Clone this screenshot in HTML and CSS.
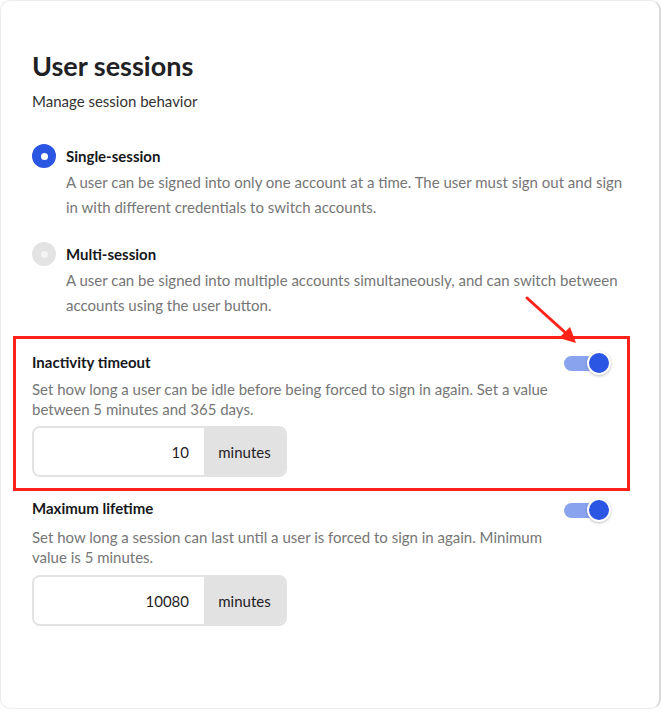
FILE: index.html
```html
<!DOCTYPE html>
<html lang="en">
<head>
<meta charset="utf-8">
<title>User sessions</title>
<link rel="stylesheet" href="styles.css">
</head>
<body>
<div class="card">
  <h1 class="title">User sessions</h1>
  <p class="subtitle">Manage session behavior</p>

  <div class="options">
    <div class="option">
      <span class="radio radio-on"></span>
      <div class="option-body">
        <div class="option-label">Single-session</div>
        <p class="option-desc">A user can be signed into only one account at a time. The user must sign out and sign in with different credentials to switch accounts.</p>
      </div>
    </div>
    <div class="option">
      <span class="radio radio-off"></span>
      <div class="option-body">
        <div class="option-label">Multi-session</div>
        <p class="option-desc">A user can be signed into multiple accounts simultaneously, and can switch between accounts using the user button.</p>
      </div>
    </div>
  </div>

  <section class="setting setting-highlight">
    <div class="setting-head">
      <div class="setting-text">
        <div class="setting-label">Inactivity timeout</div>
        <p class="setting-desc">Set how long a user can be idle before being forced to sign in again. Set a value between 5 minutes and 365 days.</p>
      </div>
      <span class="toggle"><span class="knob"></span></span>
    </div>
    <div class="field">
      <span class="field-value">10</span>
      <span class="field-unit">minutes</span>
    </div>
  </section>

  <section class="setting setting-plain">
    <div class="setting-head">
      <div class="setting-text">
        <div class="setting-label">Maximum lifetime</div>
        <p class="setting-desc">Set how long a session can last until a user is forced to sign in again. Minimum value is 5 minutes.</p>
      </div>
      <span class="toggle"><span class="knob"></span></span>
    </div>
    <div class="field">
      <span class="field-value">10080</span>
      <span class="field-unit">minutes</span>
    </div>
  </section>

  <svg class="arrow" width="70" height="60" viewBox="0 0 70 60">
    <line x1="7" y1="7" x2="48" y2="44" stroke="#ff2218" stroke-width="3" stroke-linecap="round"/>
    <polygon points="56,52 39,47 50,36" fill="#ff2218"/>
  </svg>
</div>
</body>
</html>
```

FILE: styles.css
```css
* { box-sizing: border-box; }

html, body {
  margin: 0;
  padding: 0;
  background: #ffffff;
}

body {
  font-family: "Lato", "Noto Sans", sans-serif;
  color: #1f2125;
}

.card {
  position: relative;
  width: 661px;
  height: 709px;
  background: #ffffff;
  border: 1px solid #ececec;
  border-right: 2px solid #d9d9d9;
  border-radius: 10px;
  padding: 48px 32px 0 31px;
}

.title {
  margin: 0;
  font-size: 27px;
  line-height: 34px;
  font-weight: 700;
  color: #1f2125;
}

.subtitle {
  margin: 8px 0 0;
  font-size: 15px;
  line-height: 20px;
  color: #333;
}

.options {
  display: flex;
  flex-direction: column;
  gap: 22px;
  margin-top: 33px;
}

.option {
  display: flex;
  gap: 10px;
  align-items: flex-start;
}

.radio {
  flex: none;
  width: 24px;
  height: 24px;
  border-radius: 50%;
  display: flex;
  align-items: center;
  justify-content: center;
}

.radio::after {
  content: "";
  width: 7px;
  height: 7px;
  border-radius: 50%;
  background: #ffffff;
}

.radio-on { background: #2b55e3; }
.radio-off { background: #e3e3e3; }
.radio-off::after { background: #f4f4f4; }

.option-label {
  font-size: 15px;
  line-height: 24px;
  font-weight: 700;
  color: #16181b;
}

.option-desc {
  margin: 2px 0 0;
  font-size: 15px;
  line-height: 25px;
  color: #767676;
}

.setting {
  margin: 0 -3px 0 -19px;
  border: 3px solid transparent;
  padding: 0 16px;
}

.setting-highlight {
  border-color: #ff2218;
  margin-top: 18px;
  padding-top: 13px;
  padding-bottom: 11px;
}

.setting-plain {
  border-width: 0 3px;
  padding-top: 7px;
}

.setting-head {
  display: flex;
  justify-content: space-between;
  align-items: flex-start;
  gap: 8px;
}

.setting-text {
  width: 524px;
}

.setting-label {
  font-size: 15px;
  line-height: 20px;
  font-weight: 700;
  color: #16181b;
}

.setting-desc {
  margin: 7px 0 0;
  font-size: 15px;
  line-height: 20px;
  color: #767676;
}

.setting-plain .setting-desc {
  margin-top: 9px;
}

.toggle {
  position: relative;
  flex: none;
  width: 47px;
  height: 24px;
  margin-top: -1px;
}

.setting-plain .toggle {
  margin-top: 0;
}

.toggle::before {
  content: "";
  position: absolute;
  left: 0;
  top: 5px;
  width: 34px;
  height: 15px;
  border-radius: 8px;
  background: #8aa3ef;
}

.knob {
  position: absolute;
  right: 0;
  top: 0;
  width: 24px;
  height: 24px;
  border-radius: 50%;
  background: #2b55e3;
  border: 2px solid #ffffff;
  box-shadow: 0 1px 3px rgba(0, 0, 0, 0.25);
}

.field {
  display: flex;
  width: 255px;
  height: 51px;
  margin-top: 7px;
  border: 2px solid #e2e2e2;
  border-radius: 8px;
  overflow: hidden;
  font-size: 15px;
  color: #1f2125;
}

.setting-plain .field {
  margin-top: 8px;
}

.field-value {
  flex: 1;
  display: flex;
  align-items: center;
  justify-content: flex-end;
  padding-right: 15px;
  background: #ffffff;
}

.field-unit {
  flex: none;
  width: 81px;
  display: flex;
  align-items: center;
  justify-content: center;
  background: #e2e2e2;
}

.arrow {
  position: absolute;
  left: 519px;
  top: 290px;
}
```
